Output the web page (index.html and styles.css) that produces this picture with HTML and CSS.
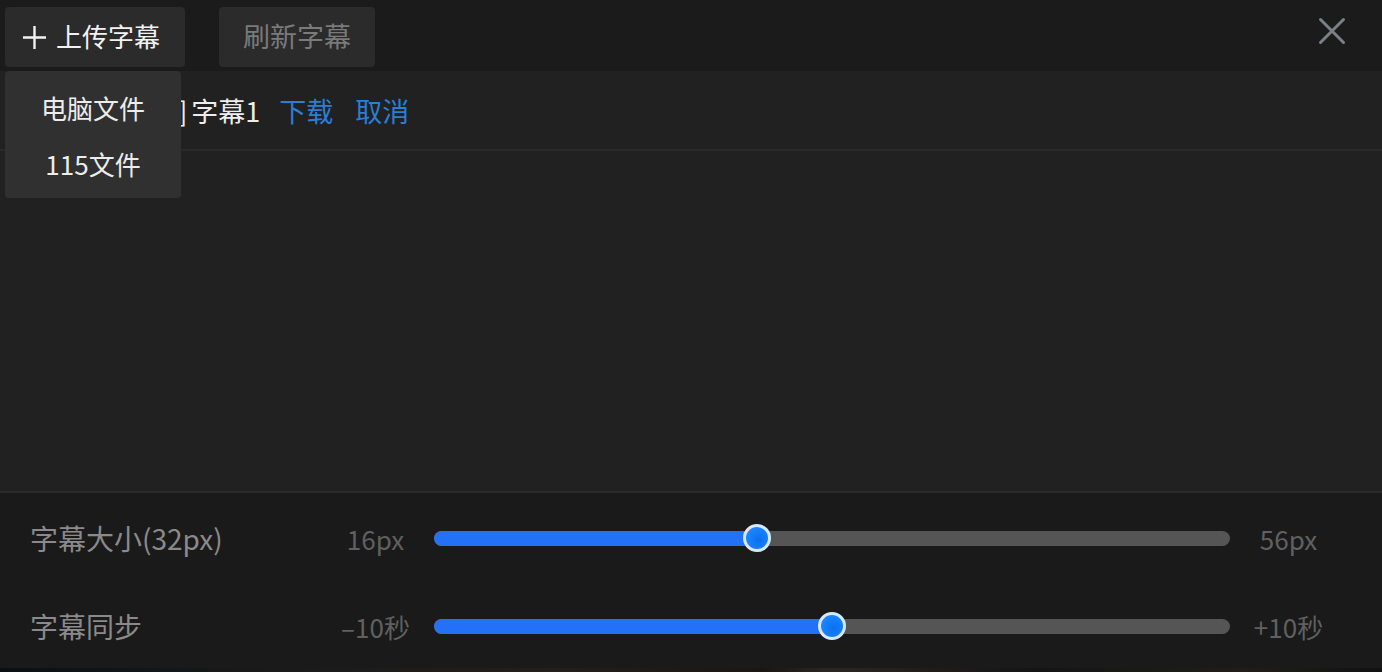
FILE: index.html
```html
<!DOCTYPE html>
<html lang="zh">
<head>
<meta charset="utf-8">
<title>字幕</title>
<link rel="stylesheet" href="styles.css">
</head>
<body>
<div class="app">
  <header class="toolbar">
    <div class="upload-wrap">
      <button class="btn btn-upload">
        <svg class="plus" width="23" height="23" viewBox="0 0 23 23"><path d="M11.5 0v23M0 11.5h23" stroke="#f2f2f2" stroke-width="2.4" fill="none"/></svg>
        <span>上传字幕</span>
      </button>
      <div class="menu">
        <div class="menu-item">电脑文件</div>
        <div class="menu-item">115文件</div>
      </div>
    </div>
    <button class="btn btn-refresh">刷新字幕</button>
    <div class="spacer"></div>
    <button class="close" aria-label="关闭">
      <svg width="28" height="28" viewBox="0 0 28 28"><path d="M2.5 2.5l23 23M25.5 2.5l-23 23" stroke="#7c8087" stroke-width="3" stroke-linecap="round" fill="none"/></svg>
    </button>
  </header>

  <section class="list">
    <div class="row">
      <span class="name"><span class="tag">[中文]</span>字幕1</span>
      <a class="link">下载</a>
      <a class="link">取消</a>
    </div>
  </section>

  <section class="settings">
    <div class="setting">
      <div class="label">字幕大小(32px)</div>
      <div class="bound">16px</div>
      <div class="track">
        <div class="fill" style="width:40.6%"></div>
        <div class="thumb" style="left:40.6%"></div>
      </div>
      <div class="bound">56px</div>
    </div>
    <div class="setting">
      <div class="label">字幕同步</div>
      <div class="bound">–10秒</div>
      <div class="track">
        <div class="fill" style="width:50%"></div>
        <div class="thumb" style="left:50%"></div>
      </div>
      <div class="bound">+10秒</div>
    </div>
  </section>
  <div class="video-strip"></div>
</div>
</body>
</html>
```

FILE: styles.css
```css
* { box-sizing: border-box; }
html, body {
  margin: 0;
  padding: 0;
  background: #1b1b1b;
  font-family: "Noto Sans CJK SC", "Noto Sans", sans-serif;
}
.app {
  width: 1382px;
  height: 672px;
  display: flex;
  flex-direction: column;
  overflow: hidden;
}
.toolbar {
  height: 71px;
  flex: none;
  display: flex;
  align-items: flex-start;
  padding: 7px 0 0 5px;
  background: #1b1b1b;
}
.upload-wrap { position: relative; }
.btn {
  height: 60px;
  border: none;
  border-radius: 4px;
  background: #2b2b2b;
  font-family: inherit;
  font-size: 26px;
  line-height: 1;
  display: flex;
  align-items: center;
  justify-content: center;
  padding: 0 0 3px;
  cursor: pointer;
}
.btn-upload {
  width: 180px;
  color: #f2f2f2;
  justify-content: flex-start;
  padding-left: 18px;
  gap: 10px;
}
.plus { display: block; margin-top: 3px; }
.btn-refresh {
  width: 156px;
  margin-left: 34px;
  color: #7a7a7a;
  font-size: 27px;
}
.spacer { flex: 1; }
.close {
  background: none;
  border: none;
  padding: 0;
  margin: 10px 36px 0 0;
  width: 28px;
  height: 28px;
  cursor: pointer;
}
.close svg { display: block; }
.menu {
  position: absolute;
  top: 64px;
  left: 0;
  width: 176px;
  background: #303030;
  border-radius: 4px;
  padding: 9px 0 6px;
  z-index: 5;
}
.menu-item {
  height: 56px;
  line-height: 56px;
  text-align: center;
  color: #ececec;
  font-size: 26px;
}
.list {
  flex: none;
  height: 420px;
  background: #212121;
}
.row {
  height: 80px;
  border-bottom: 2px solid #2a2a2a;
  display: flex;
  align-items: center;
  padding-left: 115px;
  gap: 22px;
  font-size: 27px;
}
.name { color: #ededed; margin-right: -3px; }
.tag { margin-right: 4px; }
.link { color: #2a7fd3; cursor: pointer; }
.settings {
  flex: 1;
  background: #1a1a1a;
  border-top: 2px solid #2a2a2a;
  padding: 31px 53px 0 30px;
  display: flex;
  flex-direction: column;
  gap: 60px;
}
.setting {
  height: 28px;
  display: flex;
  align-items: center;
}
.label {
  width: 305px;
  color: #8a8a8a;
  font-size: 28px;
  white-space: nowrap;
}
.bound {
  width: 81px;
  text-align: center;
  color: #606060;
  font-size: 26px;
  white-space: nowrap;
}
.track {
  flex: 1;
  margin: 0 18px;
  height: 15px;
  border-radius: 8px;
  background: #555555;
  position: relative;
}
.fill {
  height: 100%;
  background: #2371f6;
  border-radius: 8px 0 0 8px;
}
.thumb {
  position: absolute;
  top: 50%;
  width: 28px;
  height: 28px;
  margin: -14px 0 0 -14px;
  border-radius: 50%;
  border: 3px solid #d8e9ff;
  background: radial-gradient(circle at 60% 60%, #0a6ff2 0%, #1a86ff 70%, #2a90ff 100%);
}
.video-strip {
  height: 4px;
  flex: none;
  background: linear-gradient(90deg, #0c0f12 0%, #1a1a1a 20%, #22201e 40%, #181716 55%, #2a2624 60%, #141414 75%, #1f1e1c 90%, #111 100%);
}
```
